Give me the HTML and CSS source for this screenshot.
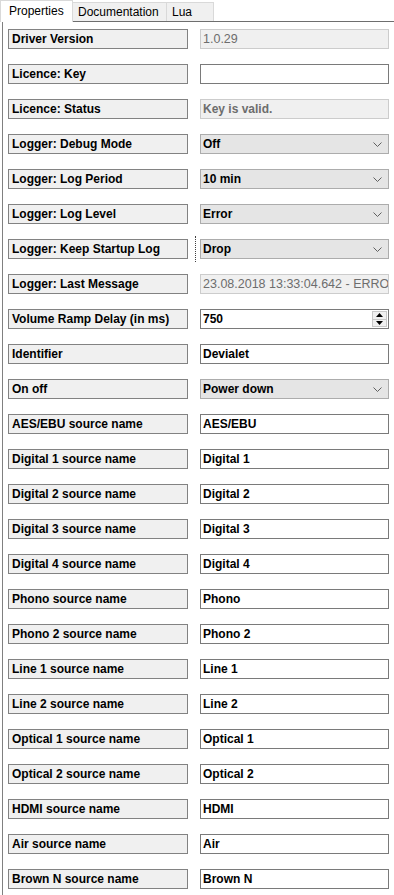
FILE: index.html
```html
<!DOCTYPE html>
<html lang="en">

<head>
  <meta charset="UTF-8">
  <meta name="viewport" content="width=device-width, initial-scale=1.0">
  <link rel="stylesheet" href="styles.css">
</head>

<body>
  <div class="tabs">
    <div class="tab active">Properties</div>
    <div class="tab">Documentation</div>
    <div class="tab">Lua</div>
  </div>

  <div class="panel">
    <div class="row">
      <div class="label">Driver Version</div>
      <div class="field readonly plain">1.0.29</div>
    </div>
    <div class="row">
      <div class="label">Licence: Key</div>
      <div class="field"></div>
    </div>
    <div class="row">
      <div class="label">Licence: Status</div>
      <div class="field readonly">Key is valid.</div>
    </div>
    <div class="row">
      <div class="label">Logger: Debug Mode</div>
      <div class="field combo"><span>Off</span><svg class="chevron" width="9" height="5" viewBox="0 0 9 5"><polyline points="0.5,0.5 4.5,4.5 8.5,0.5" fill="none" stroke="#606060" stroke-width="1"/></svg></div>
    </div>
    <div class="row">
      <div class="label">Logger: Log Period</div>
      <div class="field combo"><span>10 min</span><svg class="chevron" width="9" height="5" viewBox="0 0 9 5"><polyline points="0.5,0.5 4.5,4.5 8.5,0.5" fill="none" stroke="#606060" stroke-width="1"/></svg></div>
    </div>
    <div class="row">
      <div class="label">Logger: Log Level</div>
      <div class="field combo"><span>Error</span><svg class="chevron" width="9" height="5" viewBox="0 0 9 5"><polyline points="0.5,0.5 4.5,4.5 8.5,0.5" fill="none" stroke="#606060" stroke-width="1"/></svg></div>
    </div>
    <div class="row focused">
      <div class="label">Logger: Keep Startup Log</div>
      <div class="field combo"><span>Drop</span><svg class="chevron" width="9" height="5" viewBox="0 0 9 5"><polyline points="0.5,0.5 4.5,4.5 8.5,0.5" fill="none" stroke="#606060" stroke-width="1"/></svg></div>
      <div class="splitter-focus"></div>
    </div>
    <div class="row">
      <div class="label">Logger: Last Message</div>
      <div class="field readonly plain">23.08.2018 13:33:04.642 - ERROR</div>
    </div>
    <div class="row">
      <div class="label">Volume Ramp Delay (in ms)</div>
      <div class="field spin">
        <span>750</span>
        <div class="spin-buttons">
          <div class="spin-btn"><svg width="7" height="4" viewBox="0 0 7 4"><polygon points="3.5,0 7,4 0,4" fill="#000"/></svg></div>
          <div class="spin-btn"><svg width="7" height="4" viewBox="0 0 7 4"><polygon points="0,0 7,0 3.5,4" fill="#000"/></svg></div>
        </div>
      </div>
    </div>
    <div class="row">
      <div class="label">Identifier</div>
      <div class="field">Devialet</div>
    </div>
    <div class="row">
      <div class="label">On off</div>
      <div class="field combo"><span>Power down</span><svg class="chevron" width="9" height="5" viewBox="0 0 9 5"><polyline points="0.5,0.5 4.5,4.5 8.5,0.5" fill="none" stroke="#606060" stroke-width="1"/></svg></div>
    </div>
    <div class="row">
      <div class="label">AES/EBU source name</div>
      <div class="field">AES/EBU</div>
    </div>
    <div class="row">
      <div class="label">Digital 1 source name</div>
      <div class="field">Digital 1</div>
    </div>
    <div class="row">
      <div class="label">Digital 2 source name</div>
      <div class="field">Digital 2</div>
    </div>
    <div class="row">
      <div class="label">Digital 3 source name</div>
      <div class="field">Digital 3</div>
    </div>
    <div class="row">
      <div class="label">Digital 4 source name</div>
      <div class="field">Digital 4</div>
    </div>
    <div class="row">
      <div class="label">Phono source name</div>
      <div class="field">Phono</div>
    </div>
    <div class="row">
      <div class="label">Phono 2 source name</div>
      <div class="field">Phono 2</div>
    </div>
    <div class="row">
      <div class="label">Line 1 source name</div>
      <div class="field">Line 1</div>
    </div>
    <div class="row">
      <div class="label">Line 2 source name</div>
      <div class="field">Line 2</div>
    </div>
    <div class="row">
      <div class="label">Optical 1 source name</div>
      <div class="field">Optical 1</div>
    </div>
    <div class="row">
      <div class="label">Optical 2 source name</div>
      <div class="field">Optical 2</div>
    </div>
    <div class="row">
      <div class="label">HDMI source name</div>
      <div class="field">HDMI</div>
    </div>
    <div class="row">
      <div class="label">Air source name</div>
      <div class="field">Air</div>
    </div>
    <div class="row">
      <div class="label">Brown N source name</div>
      <div class="field">Brown N</div>
    </div>
  </div>
</body>

</html>
```

FILE: styles.css
```css
* {
  box-sizing: border-box;
}

body {
  margin: 0;
  background-color: #fff;
  font-family: "Liberation Sans", Arial, sans-serif;
  color: #000;
  overflow: hidden;
}

.tabs {
  display: flex;
  align-items: flex-start;
  height: 21px;
}

.tab {
  position: relative;
  margin-top: 2px;
  height: 19px;
  padding: 0 5px;
  background-color: #f0f0f0;
  border: 1px solid #d9d9d9;
  border-bottom: none;
  border-left: none;
  font-size: 12px;
  line-height: 19px;
  white-space: nowrap;
}

.tab.active {
  z-index: 1;
  margin-top: 0;
  height: 22px;
  width: 73px;
  padding: 0 8px;
  background-color: #fff;
  border-left: 1px solid #d9d9d9;
  line-height: 20px;
}

.tab:nth-child(2) {
  width: 94px;
}

.tab:nth-child(3) {
  width: 47px;
}

.panel {
  margin-left: 2px;
  height: 874px;
  border-top: 1px solid #6e6e6e;
  border-left: 1px solid #808080;
  padding: 7px 0 0 5px;
  display: flex;
  flex-direction: column;
  gap: 15px;
}

.row {
  position: relative;
  display: grid;
  grid-template-columns: 180px 189px;
  column-gap: 12px;
  height: 20px;
  font-size: 12px;
  font-weight: bold;
}

.label {
  background-color: #f0f0f0;
  border: 1px solid #828282;
  padding: 0 3px;
  line-height: 19px;
  white-space: nowrap;
  overflow: hidden;
}

.field {
  background-color: #fff;
  border: 1px solid #7a7a7a;
  padding: 0 2px;
  line-height: 19px;
  white-space: nowrap;
  overflow: hidden;
}

.field.readonly {
  background-color: #f0f0f0;
  border-color: #cccccc;
  color: #6d6d6d;
}

.field.plain {
  font-weight: normal;
  font-size: 12.5px;
}

.field.combo {
  display: flex;
  justify-content: space-between;
  align-items: center;
  background-color: #e5e5e5;
  border-color: #acacac;
}

.chevron {
  margin-right: 4px;
}

.field.spin {
  display: flex;
  justify-content: space-between;
  align-items: center;
  padding-right: 1px;
}

.spin-buttons {
  display: flex;
  flex-direction: column;
  width: 15px;
  height: 16px;
}

.spin-btn {
  flex: 1;
  display: flex;
  align-items: center;
  justify-content: center;
  background-color: #f0f0f0;
  border: 1px solid #c8c8c8;
}

.spin-btn + .spin-btn {
  border-top: none;
}

/* dotted focus line of the splitter */
.splitter-focus {
  position: absolute;
  left: 187px;
  top: -3px;
  height: 26px;
  width: 1px;
  border-left: 1px dotted #404040;
}
```
